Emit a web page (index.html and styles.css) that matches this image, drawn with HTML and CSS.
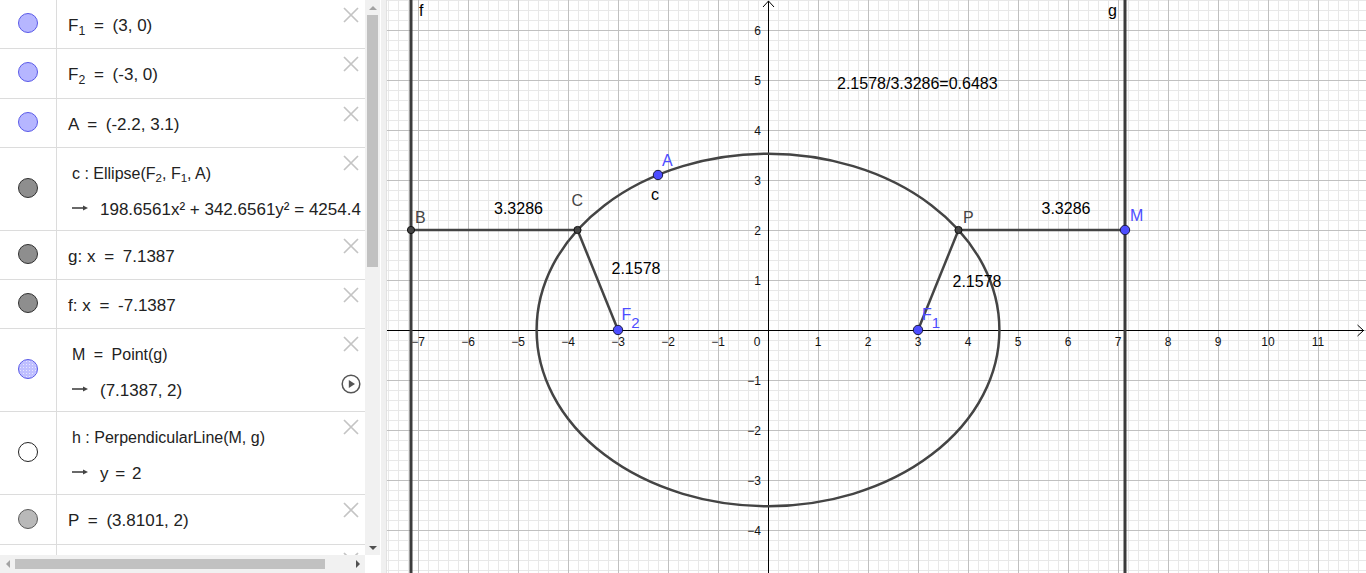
FILE: index.html
```html
<!DOCTYPE html>
<html>
<head>
<meta charset="utf-8">
<link rel="stylesheet" href="styles.css">
</head>
<body>
<div class="app">
  <div class="algebra">
    <div class="list">
      <div class="row single">
        <div class="marble-cell"><span class="marble pt-blue"></span></div>
        <div class="content"><div class="line">F<span class="sub">1</span> <span class="op">=</span> (3, 0)</div></div>
        <div class="actions"><svg class="x-icon" viewBox="0 0 16 16"><path d="M1 1L15 15M15 1L1 15"/></svg></div>
      </div>
      <div class="row single">
        <div class="marble-cell"><span class="marble pt-blue"></span></div>
        <div class="content"><div class="line">F<span class="sub">2</span> <span class="op">=</span> (-3, 0)</div></div>
        <div class="actions"><svg class="x-icon" viewBox="0 0 16 16"><path d="M1 1L15 15M15 1L1 15"/></svg></div>
      </div>
      <div class="row single">
        <div class="marble-cell"><span class="marble pt-blue"></span></div>
        <div class="content"><div class="line">A <span class="op">=</span> (-2.2, 3.1)</div></div>
        <div class="actions"><svg class="x-icon" viewBox="0 0 16 16"><path d="M1 1L15 15M15 1L1 15"/></svg></div>
      </div>
      <div class="row double">
        <div class="marble-cell"><span class="marble dark"></span></div>
        <div class="content">
          <div class="line def">c : Ellipse(F<span class="sub">2</span>, F<span class="sub">1</span>, A)</div>
          <div class="line"><svg class="arrow" viewBox="0 0 16 8"><path d="M0 4H12"/><polygon points="11,1.5 16,4 11,6.5"/></svg>198.6561x² + 342.6561y² = 4254.4</div>
        </div>
        <div class="actions"><svg class="x-icon" viewBox="0 0 16 16"><path d="M1 1L15 15M15 1L1 15"/></svg></div>
      </div>
      <div class="row single">
        <div class="marble-cell"><span class="marble dark"></span></div>
        <div class="content"><div class="line">g: x <span class="op">=</span> 7.1387</div></div>
        <div class="actions"><svg class="x-icon" viewBox="0 0 16 16"><path d="M1 1L15 15M15 1L1 15"/></svg></div>
      </div>
      <div class="row single">
        <div class="marble-cell"><span class="marble dark"></span></div>
        <div class="content"><div class="line">f: x <span class="op">=</span> -7.1387</div></div>
        <div class="actions"><svg class="x-icon" viewBox="0 0 16 16"><path d="M1 1L15 15M15 1L1 15"/></svg></div>
      </div>
      <div class="row double">
        <div class="marble-cell"><span class="marble dotted"></span></div>
        <div class="content">
          <div class="line def">M <span class="op">=</span> Point(g)</div>
          <div class="line"><svg class="arrow" viewBox="0 0 16 8"><path d="M0 4H12"/><polygon points="11,1.5 16,4 11,6.5"/></svg>(7.1387, 2)</div>
        </div>
        <div class="actions">
          <svg class="x-icon" viewBox="0 0 16 16"><path d="M1 1L15 15M15 1L1 15"/></svg>
          <svg class="play" viewBox="0 0 20 20"><circle cx="10" cy="10" r="8.8"/><polygon points="7.8,6 14,10 7.8,14"/></svg>
        </div>
      </div>
      <div class="row double">
        <div class="marble-cell"><span class="marble hollow"></span></div>
        <div class="content">
          <div class="line def">h : PerpendicularLine(M, g)</div>
          <div class="line"><svg class="arrow" viewBox="0 0 16 8"><path d="M0 4H12"/><polygon points="11,1.5 16,4 11,6.5"/></svg>y <span class="op2">=</span> 2</div>
        </div>
        <div class="actions"><svg class="x-icon" viewBox="0 0 16 16"><path d="M1 1L15 15M15 1L1 15"/></svg></div>
      </div>
      <div class="row single">
        <div class="marble-cell"><span class="marble light"></span></div>
        <div class="content"><div class="line">P <span class="op">=</span> (3.8101, 2)</div></div>
        <div class="actions"><svg class="x-icon" viewBox="0 0 16 16"><path d="M1 1L15 15M15 1L1 15"/></svg></div>
      </div>
      <div class="row single">
        <div class="marble-cell"></div>
        <div class="content"></div>
        <div class="actions"><svg class="x-icon" viewBox="0 0 16 16"><path d="M1 1L15 15M15 1L1 15"/></svg></div>
      </div>
    </div>
    <div class="vscroll">
      <div class="arrow-box"><span class="tri-up"></span></div>
      <div class="vthumb"></div>
      <div class="spacer"></div>
      <div class="arrow-box"><span class="tri-down"></span></div>
    </div>
    <div class="hscroll">
      <div class="arrow-box"><span class="tri-left"></span></div>
      <div class="hthumb"></div>
      <div class="spacer"></div>
      <div class="arrow-box"><span class="tri-right"></span></div>
    </div>
    <div class="corner"></div>
  </div>
  <div class="splitter"></div>
  <div class="graphics">
    <svg class="plot" width="979" height="573" viewBox="387 0 979 573">
      <defs>
        <pattern id="minor" x="768" y="330" width="10" height="10" patternUnits="userSpaceOnUse">
          <rect x="0" y="0" width="1" height="10" fill="#e8e8e8"/>
          <rect x="0" y="0" width="10" height="1" fill="#e8e8e8"/>
        </pattern>
        <pattern id="major" x="768" y="330" width="50" height="50" patternUnits="userSpaceOnUse">
          <rect x="0" y="0" width="1" height="50" fill="#c0c0c0"/>
          <rect x="0" y="0" width="50" height="1" fill="#c0c0c0"/>
        </pattern>
      </defs>
      <rect x="387" y="0" width="979" height="573" fill="#fff"/>
      <rect x="387" y="0" width="979" height="573" fill="url(#minor)"/>
      <rect x="387" y="0" width="979" height="573" fill="url(#major)"/>

      <g class="axes">
        <line x1="387" y1="330.5" x2="1364" y2="330.5"/>
        <polyline points="1357.5,325 1363.5,330.5 1357.5,336"/>
        <line x1="768.5" y1="573" x2="768.5" y2="1"/>
        <polyline points="763,7 768.5,1 774,7"/>
      </g>

      <g class="ticks-x">
        <text x="418" y="346">−7</text>
        <text x="468" y="346">−6</text>
        <text x="518" y="346">−5</text>
        <text x="568" y="346">−4</text>
        <text x="618" y="346">−3</text>
        <text x="668" y="346">−2</text>
        <text x="718" y="346">−1</text>
        <text x="757" y="346">0</text>
        <text x="818" y="346">1</text>
        <text x="868" y="346">2</text>
        <text x="918" y="346">3</text>
        <text x="968" y="346">4</text>
        <text x="1018" y="346">5</text>
        <text x="1068" y="346">6</text>
        <text x="1118" y="346">7</text>
        <text x="1168" y="346">8</text>
        <text x="1218" y="346">9</text>
        <text x="1268" y="346">10</text>
        <text x="1318" y="346">11</text>
      </g>
      <g class="ticks-y">
        <text x="761" y="34.5">6</text>
        <text x="761" y="84.5">5</text>
        <text x="761" y="134.5">4</text>
        <text x="761" y="184.5">3</text>
        <text x="761" y="234.5">2</text>
        <text x="761" y="284.5">1</text>
        <text x="761" y="384.5">−1</text>
        <text x="761" y="434.5">−2</text>
        <text x="761" y="484.5">−3</text>
        <text x="761" y="534.5">−4</text>
      </g>

      <g class="obj">
        <line class="thick" x1="411" y1="0" x2="411" y2="573"/>
        <line class="thick" x1="1125" y1="0" x2="1125" y2="573"/>
        <ellipse cx="768" cy="330" rx="231.4" ry="176.2"/>
        <line x1="411" y1="230" x2="577.5" y2="230"/>
        <line x1="958.5" y1="230" x2="1125" y2="230"/>
        <line x1="577.5" y1="230" x2="618" y2="330"/>
        <line x1="958.5" y1="230" x2="918" y2="330"/>
      </g>

      <g class="pt-dark">
        <circle cx="411" cy="230" r="3.6"/>
        <circle cx="577.5" cy="230" r="3.6"/>
        <circle cx="958.5" cy="230" r="3.6"/>
      </g>
      <g class="pt-blue">
        <circle cx="658" cy="175" r="4.7"/>
        <circle cx="618" cy="330" r="4.7"/>
        <circle cx="918" cy="330" r="4.7"/>
        <circle cx="1125" cy="230" r="4.7"/>
      </g>

      <g class="labels">
        <text class="blue" x="662" y="166">A</text>
        <text x="651" y="200">c</text>
        <text class="gray" x="415" y="223">B</text>
        <text class="gray" x="571.5" y="205.5">C</text>
        <text class="gray" x="963" y="223">P</text>
        <text class="blue" x="1130" y="221">M</text>
        <text class="blue" x="621.5" y="320">F<tspan dy="8" class="idx">2</tspan></text>
        <text class="blue" x="922" y="320">F<tspan dy="8" class="idx">1</tspan></text>
        <text x="494" y="214">3.3286</text>
        <text x="611.5" y="274">2.1578</text>
        <text x="1041.5" y="213.5">3.3286</text>
        <text x="952.5" y="286.5">2.1578</text>
        <text x="837" y="88.5">2.1578/3.3286=0.6483</text>
        <text x="419" y="16">f</text>
        <text x="1108" y="16">g</text>
      </g>
    </svg>
  </div>
</div>
</body>
</html>
```

FILE: styles.css
```css
* { box-sizing: border-box; }

html, body {
  margin: 0;
  padding: 0;
  background: #fff;
  overflow: hidden;
}

body {
  font-family: "Liberation Sans", Arial, sans-serif;
  color: #222;
}

.app {
  display: flex;
  width: 1366px;
  height: 573px;
}

/* ---------- Algebra view ---------- */
.algebra {
  width: 380px;
  flex: none;
  display: grid;
  grid-template-columns: 365px 15px;
  grid-template-rows: 555px 18px;
  background: #fff;
}

.list {
  overflow: hidden;
}

.row {
  display: flex;
  border-bottom: 1px solid #dcdcdc;
}

.row.single { height: 49.3px; }
.row.double { height: 83px; }

.marble-cell {
  width: 57px;
  flex: none;
  border-right: 1px solid #dcdcdc;
  display: flex;
  align-items: center;
  justify-content: center;
  padding-bottom: 2px;
}

.marble {
  display: block;
  width: 20px;
  height: 20px;
  border-radius: 50%;
  border: 1px solid #333;
}

.marble.pt-blue { background: #b6b6ff; border-color: #5a5ae8; }
.marble.dark { background: #8e8e8e; border-color: #303030; }
.marble.light { background: #b9b9b9; border-color: #5a5a5a; }
.marble.hollow { background: #fff; border-color: #222; }
.marble.dotted {
  background-color: #bfbfff;
  background-image: radial-gradient(circle, #e6e6ff 0.7px, transparent 0.9px);
  background-size: 3px 3px;
  border-color: #5a5ae8;
}

.content {
  flex: 1;
  min-width: 0;
  padding: 11px 0 0 11px;
  white-space: nowrap;
}

.row.double .content { padding-left: 15px; }

.line {
  height: 30px;
  line-height: 30px;
  font-size: 17px;
}

.line.def { font-size: 16px; }

.row.double .line + .line { margin-top: 6px; }

.sub {
  font-size: 0.72em;
  vertical-align: -0.3em;
  line-height: 0;
}

.op { margin: 0 4px; }
.op2 { margin: 0 2px; }

.arrow {
  width: 16px;
  height: 8px;
  margin-right: 12px;
  vertical-align: 3px;
}
.arrow path { stroke: #444; stroke-width: 1.6; fill: none; }
.arrow polygon { fill: #444; }

.actions {
  width: 28px;
  flex: none;
  display: flex;
  flex-direction: column;
  align-items: center;
  padding-top: 7px;
}

.x-icon {
  width: 16px;
  height: 16px;
  flex: none;
}
.x-icon path { stroke: #c4c4c4; stroke-width: 1.7; fill: none; }

.play {
  width: 20px;
  height: 20px;
  margin-top: 22px;
  flex: none;
}
.play circle { fill: none; stroke: #555; stroke-width: 1.5; }
.play polygon { fill: #555; }

/* ---------- scrollbars ---------- */
.vscroll {
  background: #f1f1f1;
  display: flex;
  flex-direction: column;
  align-items: center;
}

.hscroll {
  background: #f1f1f1;
  display: flex;
  align-items: center;
}

.corner { background: #fff; }

.arrow-box {
  width: 15px;
  height: 15px;
  flex: none;
  display: flex;
  align-items: center;
  justify-content: center;
}

.spacer { flex: 1; }

.vthumb {
  width: 11px;
  height: 252px;
  background: #c1c1c1;
  flex: none;
}

.hthumb {
  width: 310px;
  height: 10px;
  background: #c1c1c1;
  flex: none;
}

.tri-up, .tri-down, .tri-left, .tri-right {
  width: 0;
  height: 0;
  display: block;
}
.tri-up {
  border-left: 4px solid transparent;
  border-right: 4px solid transparent;
  border-bottom: 4px solid #a3a3a3;
}
.tri-down {
  border-left: 4px solid transparent;
  border-right: 4px solid transparent;
  border-top: 4px solid #505050;
}
.tri-left {
  border-top: 4px solid transparent;
  border-bottom: 4px solid transparent;
  border-right: 4px solid #a3a3a3;
}
.tri-right {
  border-top: 4px solid transparent;
  border-bottom: 4px solid transparent;
  border-left: 4px solid #505050;
}

/* ---------- splitter ---------- */
.splitter {
  width: 7px;
  flex: none;
  background: #f0f0f0;
  border-left: 1px solid #fff;
  border-right: 1px solid #e2e2e2;
}

/* ---------- graphics view ---------- */
.graphics {
  flex: 1;
  min-width: 0;
  overflow: hidden;
  background: #fff;
}

.plot {
  display: block;
  font-family: "Liberation Sans", Arial, sans-serif;
}

.axes line, .axes polyline {
  stroke: #000;
  stroke-width: 1;
  fill: none;
}

.ticks-x text {
  font-size: 12px;
  fill: #111;
  text-anchor: middle;
}

.ticks-y text {
  font-size: 12px;
  fill: #111;
  text-anchor: end;
}

.obj line, .obj ellipse {
  stroke: #444;
  stroke-width: 2.5;
  fill: none;
}

.obj line.thick { stroke-width: 3; stroke: #3c3c3c; }

.pt-dark circle {
  fill: #444;
  stroke: #111;
  stroke-width: 1;
}

.pt-blue circle {
  fill: #4d4dff;
  stroke: #1a1a40;
  stroke-width: 1;
}

.labels text {
  font-size: 16px;
  fill: #000;
}

.labels text.blue { fill: #4d4dff; }
.labels text.gray { fill: #444; }
.labels .idx { font-size: 15px; }
```
